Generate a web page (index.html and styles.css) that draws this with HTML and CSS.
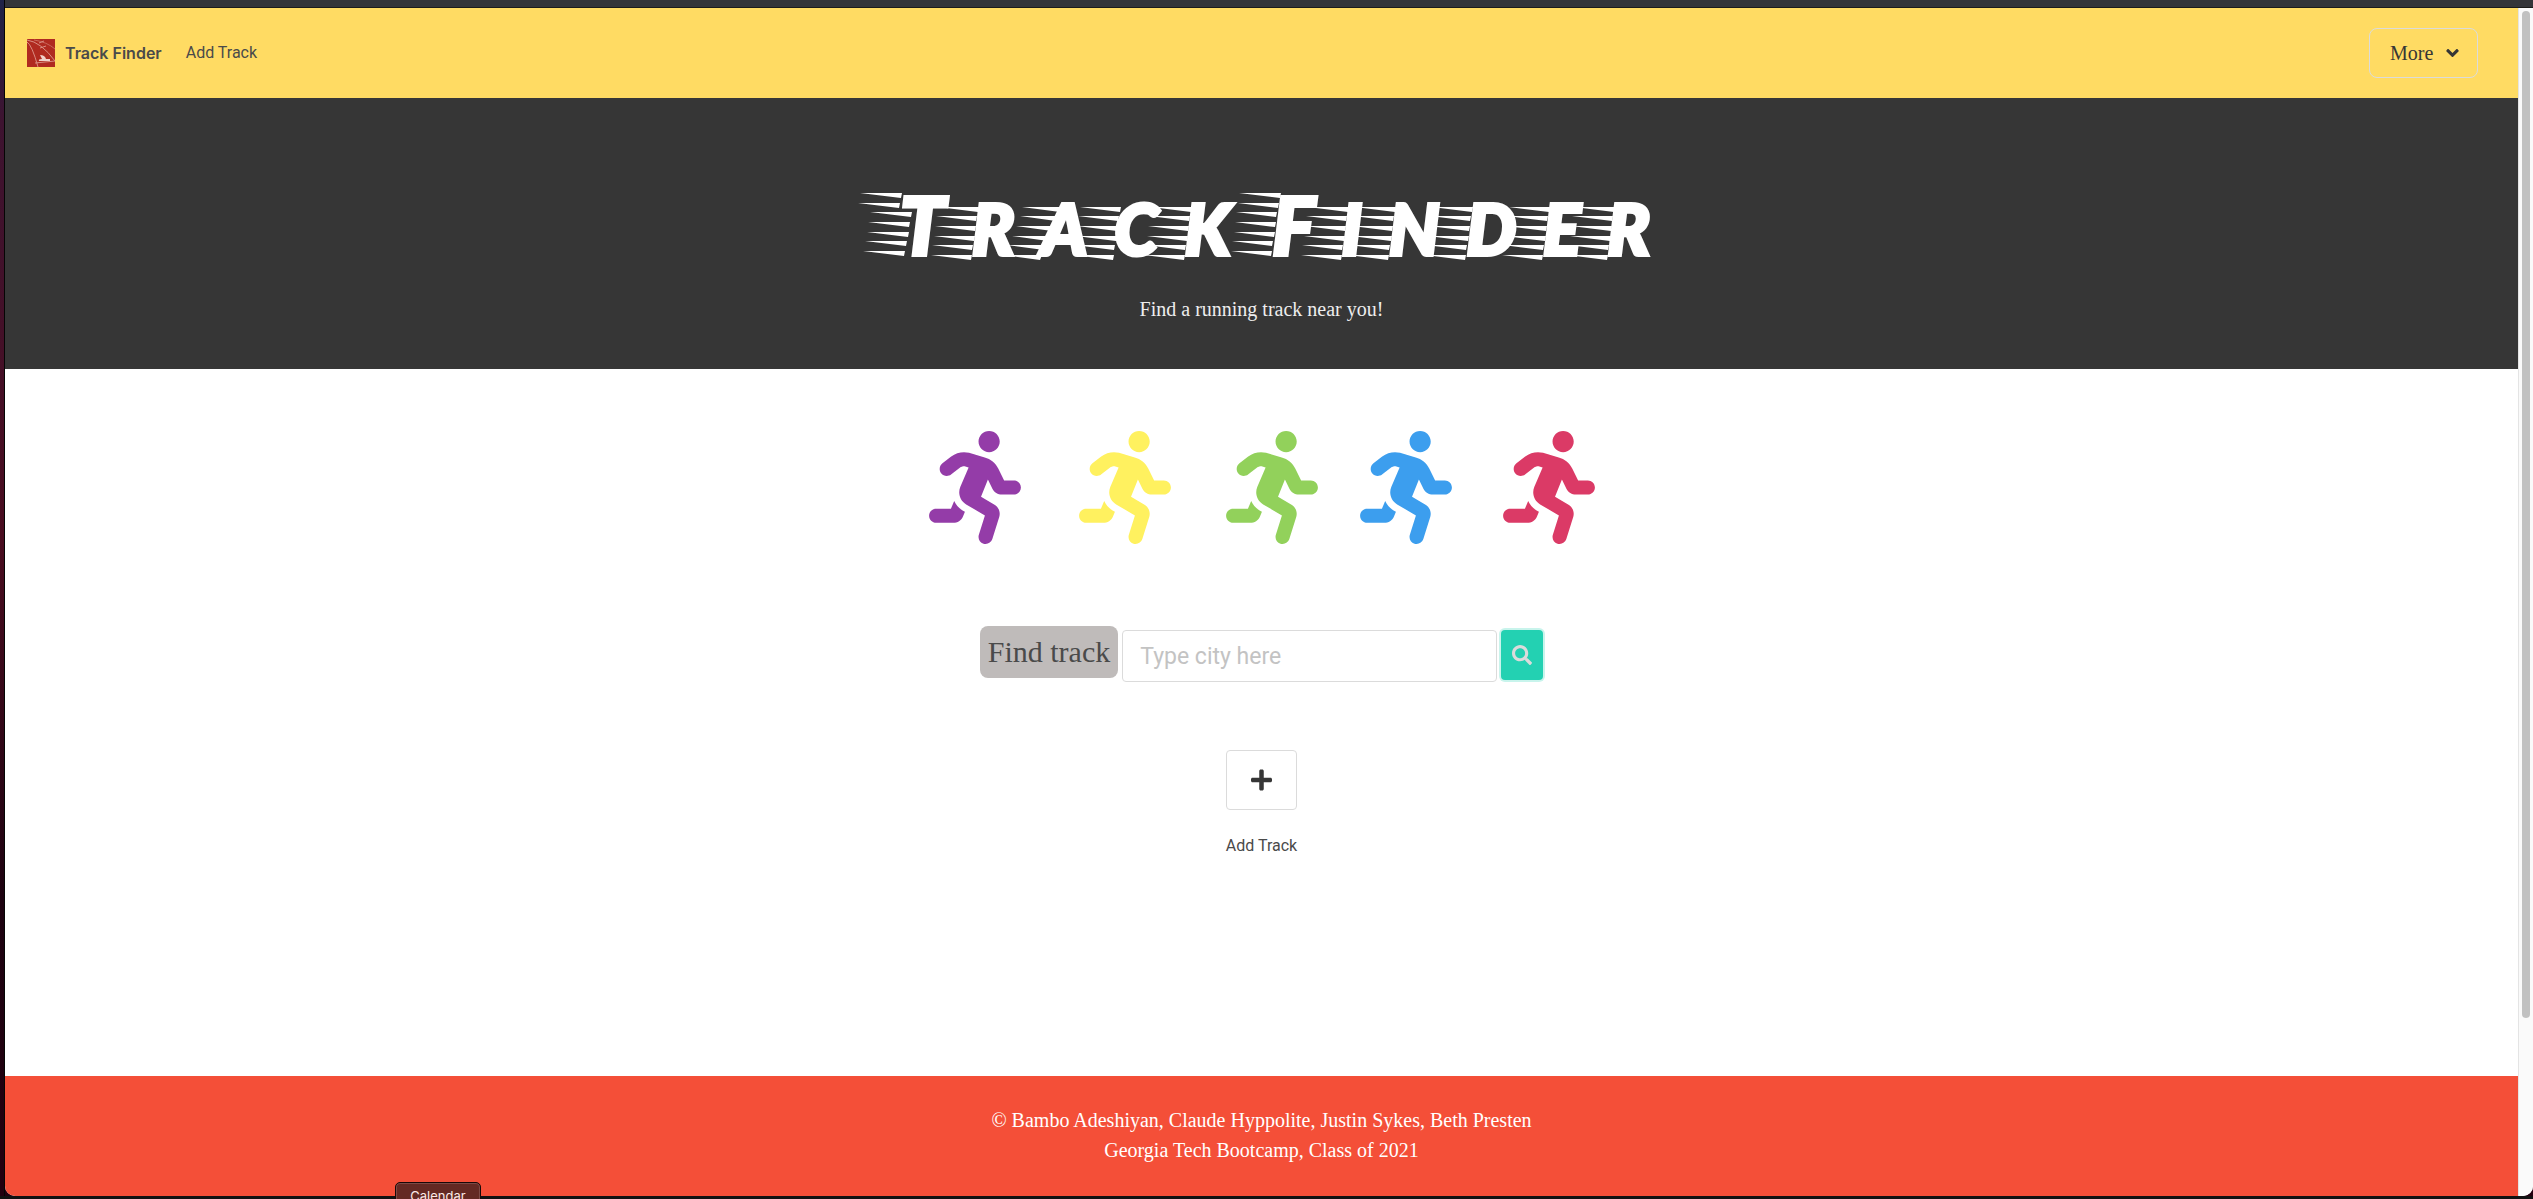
FILE: index.html
```html
<!DOCTYPE html>
<html lang="en">
<head>
<meta charset="utf-8">
<title>Track Finder</title>
<link rel="stylesheet" href="styles.css">
</head>
<body>
<svg class="defs" aria-hidden="true">
  <symbol id="runner" viewBox="0 0 416 512"><path d="M272 96c26.51 0 48-21.49 48-48S298.51 0 272 0s-48 21.49-48 48 21.49 48 48 48zM113.69 317.47l-14.8 34.52H32c-17.67 0-32 14.33-32 32s14.33 32 32 32h77.45c19.25 0 36.58-11.44 44.11-29.09l8.79-20.52-10.67-6.3c-17.32-10.23-30.06-25.37-37.99-42.61zM384 223.99h-44.03l-26.06-53.25c-12.5-25.55-35.45-44.23-61.78-50.94l-71.08-21.14c-28.3-6.8-57.77-.55-80.84 17.14l-39.67 30.41c-14.03 10.75-16.69 30.83-5.94 44.86s30.84 16.69 44.86 5.94l39.66-30.41c7.67-5.89 17.44-8 25.27-6.14l14.7 4.37-37.46 87.39c-12.62 29.48-1.31 64.01 26.3 80.31l84.98 50.17-27.47 87.73c-5.28 16.86 4.11 34.82 20.97 40.09 3.19 1 6.41 1.48 9.58 1.48 13.61 0 26.23-8.77 30.52-22.45l31.64-101.06c5.91-20.77-2.89-43.08-21.64-54.39l-61.24-36.14 31.31-78.28 20.27 41.43c8 16.34 24.92 26.89 43.11 26.89H384c17.67 0 32-14.33 32-32s-14.33-31.99-32-31.99z"/></symbol>
  <symbol id="streaks" viewBox="0 0 56 64">
    <path d="M13 10L54 10L53 15ZM11 19L52 19L51 24ZM10 29L51 29L50 34ZM9 39L50 39L49 44ZM7 48L48 48L47 53ZM6 58L47 58L46 63Z"/>
  </symbol>
  <symbol id="streaks-tall" viewBox="0 0 56 64">
    <path d="M14 0L56 0L55 5ZM13 10L54 10L53 15ZM11 19L52 19L51 24ZM10 29L51 29L50 34ZM9 39L50 39L49 44ZM7 48L48 48L47 53ZM6 58L47 58L46 63Z"/>
  </symbol>
  <symbol id="streaks-t" viewBox="-4 0 56 64" overflow="visible">
    <path d="M3 0L45 0L44 5ZM1 10L43 10L42 15ZM13 19L55 19L54 24ZM11 29L53 29L52 34ZM10 39L52 39L51 44ZM8 48L50 48L49 53ZM6 58L48 58L47 63Z"/>
  </symbol>
  <symbol id="streaks-a" viewBox="0 0 56 64" overflow="visible">
    <path d="M28 10L68 10L66 15ZM26 19L64 19L62 24ZM22 29L60 29L58 34ZM18 39L56 39L54 44ZM13 48L52 48L50 53ZM8 58L48 58L46 63Z"/>
  </symbol>
</svg>
<div class="window">
  <main class="page">
    <nav class="navbar">
      <a class="brand" href="#">
        <svg class="logo" viewBox="0 0 28 28" aria-hidden="true">
          <rect width="28" height="28" fill="#b02a20"/>
          <g fill="none" stroke="#d98d82"><path d="M0 3Q5 6 11 28M0 1Q14 3 28 22M8 24L28 22"/><path d="M7 1Q20 3 28 10" stroke="#c9675b"/><path d="M12 4l5-2M13 9l6-2"/></g>
          <path d="M13 16q5 0 6 4h4v2H12q-1-2 3-2z" fill="#f0d2cb"/>
        </svg>
        <span>Track Finder</span>
      </a>
      <a class="nav-link" href="#">Add Track</a>
      <button class="more" type="button">More
        <svg class="more-icon" viewBox="0 0 320 512" aria-hidden="true"><path d="M143 352.3L7 216.3c-9.4-9.4-9.4-24.6 0-33.9l22.6-22.6c9.4-9.4 24.6-9.4 33.9 0l96.4 96.4 96.4-96.4c9.4-9.4 24.6-9.4 33.9 0l22.6 22.6c9.4 9.4 9.4 24.6 0 33.9l-136 136c-9.2 9.4-24.4 9.4-33.8 0z"/></svg>
      </button>
    </nav>
    <header class="hero">
      <h1 class="title"><span class="letter cap"><svg><use href="#streaks-t"/></svg>T</span><span class="letter"><svg><use href="#streaks"/></svg>R</span><span class="letter"><svg><use href="#streaks-a"/></svg>A</span><span class="letter"><svg><use href="#streaks"/></svg>C</span><span class="letter"><svg><use href="#streaks"/></svg>K</span> <span class="letter cap"><svg><use href="#streaks-tall"/></svg>F</span><span class="letter"><svg><use href="#streaks"/></svg>I</span><span class="letter"><svg><use href="#streaks"/></svg>N</span><span class="letter"><svg><use href="#streaks"/></svg>D</span><span class="letter"><svg><use href="#streaks"/></svg>E</span><span class="letter"><svg><use href="#streaks"/></svg>R</span></h1>
      <p class="subtitle">Find a running track near you!</p>
    </header>
    <section class="content">
      <div class="runners" aria-hidden="true">
        <svg class="runner purple"><use href="#runner"/></svg>
        <svg class="runner yellow"><use href="#runner"/></svg>
        <svg class="runner green"><use href="#runner"/></svg>
        <svg class="runner blue"><use href="#runner"/></svg>
        <svg class="runner red"><use href="#runner"/></svg>
      </div>
      <form class="search">
        <label class="search-label" for="city">Find track</label>
        <input class="search-input" id="city" type="text" placeholder="Type city here">
        <button class="search-button" type="button" aria-label="Search">
          <svg viewBox="0 0 512 512" aria-hidden="true"><path d="M505 442.7L405.3 343c-4.5-4.5-10.6-7-17-7H372c27.6-35.3 44-79.7 44-128C416 93.1 322.9 0 208 0S0 93.1 0 208s93.1 208 208 208c48.3 0 92.7-16.4 128-44v16.3c0 6.4 2.5 12.5 7 17l99.7 99.7c9.4 9.4 24.6 9.4 33.9 0l28.3-28.3c9.4-9.4 9.4-24.6.1-34zM208 336c-70.7 0-128-57.2-128-128 0-70.7 57.2-128 128-128 70.7 0 128 57.2 128 128 0 70.7-57.2 128-128 128z"/></svg>
        </button>
      </form>
      <button class="add-button" type="button" aria-label="Add a track">
        <svg viewBox="0 0 448 512" aria-hidden="true"><path d="M416 208H272V64c0-17.67-14.33-32-32-32h-32c-17.67 0-32 14.33-32 32v144H32c-17.67 0-32 14.33-32 32v32c0 17.67 14.33 32 32 32h144v144c0 17.67 14.33 32 32 32h32c17.67 0 32-14.33 32-32V304h144c17.67 0 32-14.33 32-32v-32c0-17.67-14.33-32-32-32z"/></svg>
      </button>
      <a class="add-link" href="#">Add Track</a>
    </section>
    <footer class="footer">
      <p>© Bambo Adeshiyan, Claude Hyppolite, Justin Sykes, Beth Presten</p>
      <p>Georgia Tech Bootcamp, Class of 2021</p>
    </footer>
  </main>
  <div class="scrollbar" aria-hidden="true"><div class="thumb"></div></div>
</div>
<div class="dock-label">Calendar</div>
</body>
</html>
```
FILE: styles.css
```css
* { box-sizing: border-box; }

body {
  margin: 0;
  height: 100vh;
  padding: 8px 0 3px 5px;
  overflow: hidden;
  position: relative;
  background: linear-gradient(#343539, #343539) 5px 0 / 100% 7px no-repeat,
    linear-gradient(#1b1b1b, #1b1b1b) 5px 7px / 100% 1px no-repeat,
    linear-gradient(#111, #111) 0 100% / 100% 3px no-repeat,
    linear-gradient(90deg, transparent 4px, #050505 4px) 0 0 / 5px 100% no-repeat,
    linear-gradient(#1f2348, #3d1330 10%, #4a0d20 45%, #1d0210 75%, #23000f);
  font-family: "Liberation Serif", "Times New Roman", serif;
  font-size: 20px;
  line-height: 30px;
  color: #4a4a4a;
}

p, h1 { margin: 0; }
a { color: inherit; text-decoration: none; }
button, input { font: inherit; margin: 0; }
svg { display: block; fill: currentColor; }
.defs { position: absolute; width: 0; height: 0; }

.window {
  display: flex;
  height: 100%;
  overflow: hidden;
  border-radius: 0 0 10px 10px;
  background: #fff;
}

.page {
  flex: 1;
  display: flex;
  flex-direction: column;
}

.navbar {
  display: flex;
  align-items: center;
  height: 90px;
  padding: 0 40px 0 22px;
  background: #ffdb63;
  font-family: Inter, sans-serif;
  font-size: 16px;
  line-height: 24px;
}

.brand {
  display: flex;
  align-items: center;
  gap: 10px;
  font-weight: 600;
}

.logo { width: 28px; height: 28px; }
.nav-link { margin-left: 24px; font-family: Roboto, sans-serif; }

.more {
  display: flex;
  align-items: center;
  justify-content: space-between;
  width: 109px;
  height: 50px;
  margin-left: auto;
  padding: 0 18px 0 20px;
  border: 1px solid #dbdbdb;
  border-radius: 8px;
  background: transparent;
  color: #363636;
  font-family: "Liberation Serif", "Times New Roman", serif;
  font-size: 20px;
}

.more-icon { width: 13px; height: 20px; }

.hero {
  height: 271px;
  padding-top: 76px;
  background: #363636;
  color: #fff;
  text-align: center;
}

.title {
  height: 120px;
  font-family: Lato, sans-serif;
  font-size: 70px;
  font-style: italic;
  font-weight: 900;
  line-height: 100px;
  white-space: nowrap;
  -webkit-text-stroke: 4px currentColor;
}

.letter {
  position: relative;
  display: inline-block;
  padding-left: 27px;
}

.cap { font-size: 80px; }

.letter svg {
  position: absolute;
  right: calc(100% - 36px);
  bottom: 17px;
  width: 56px;
  height: 64px;
  overflow: visible;
}

.subtitle { color: #eee; }

.content {
  flex: 1;
  display: flex;
  flex-direction: column;
  align-items: center;
  padding-top: 62px;
  background: #fff;
}

.runners {
  display: grid;
  grid-template-columns: 150px 147px 134px 143px 92px;
}

.runner { width: 92px; height: 113px; }
.purple { color: #943ca8; }
.yellow { color: #fff15f; }
.green { color: #92d15b; }
.blue { color: #3c9eee; }
.red { color: #db3a66; }

.search {
  display: flex;
  align-items: flex-end;
  gap: 4px;
  margin-top: 82px;
}

.search-label {
  height: 52px;
  margin-bottom: 4px;
  padding: 0 8px;
  border-radius: 8px;
  background: #bfbbba;
  font-size: 30px;
  line-height: 52px;
}

.search-input {
  width: 375px;
  height: 52px;
  padding: 0 17px;
  border: 1px solid #dbdbdb;
  border-radius: 4px;
  background: #fff;
  font-family: Roboto, sans-serif;
  font-size: 23px;
}

.search-input::placeholder { color: #c3c3c3; opacity: 1; }

.search-button {
  display: flex;
  align-items: center;
  justify-content: center;
  width: 42px;
  height: 50px;
  margin-bottom: 2px;
  padding: 0;
  border: 0;
  border-radius: 4px;
  background: #23d1b2;
  box-shadow: 0 0 0 2px #c8f4ec;
  color: #dbdbdb;
}

.search-button svg { width: 20px; height: 20px; }

.add-button {
  display: flex;
  align-items: center;
  justify-content: center;
  width: 71px;
  height: 60px;
  margin-top: 68px;
  padding: 0;
  border: 1px solid #dbdbdb;
  border-radius: 4px;
  background: #fff;
  color: #363636;
}

.add-button svg { width: 21px; height: 24px; }

.add-link {
  margin-top: 24px;
  font-family: Roboto, sans-serif;
  font-size: 16px;
  line-height: 24px;
}

.footer {
  height: 120px;
  padding-top: 29px;
  background: #f44f38;
  color: #fff;
  text-align: center;
}

.scrollbar {
  width: 15px;
  padding: 3px 3px 0;
  border-left: 1px solid #e4e4e4;
  background: #fafafa;
}

.thumb {
  width: 8px;
  height: 85%;
  border-radius: 4px;
  background: #c1c1c1;
}

.dock-label {
  position: absolute;
  left: 395px;
  bottom: -10px;
  width: 86px;
  height: 27px;
  border: 1px solid #180808;
  border-radius: 5px;
  background: #642923;
  box-shadow: inset 0 0 0 1px #7d4a45;
  color: #fbe9e7;
  font-family: Inter, sans-serif;
  font-size: 13px;
  line-height: 27px;
  text-align: center;
}
```
